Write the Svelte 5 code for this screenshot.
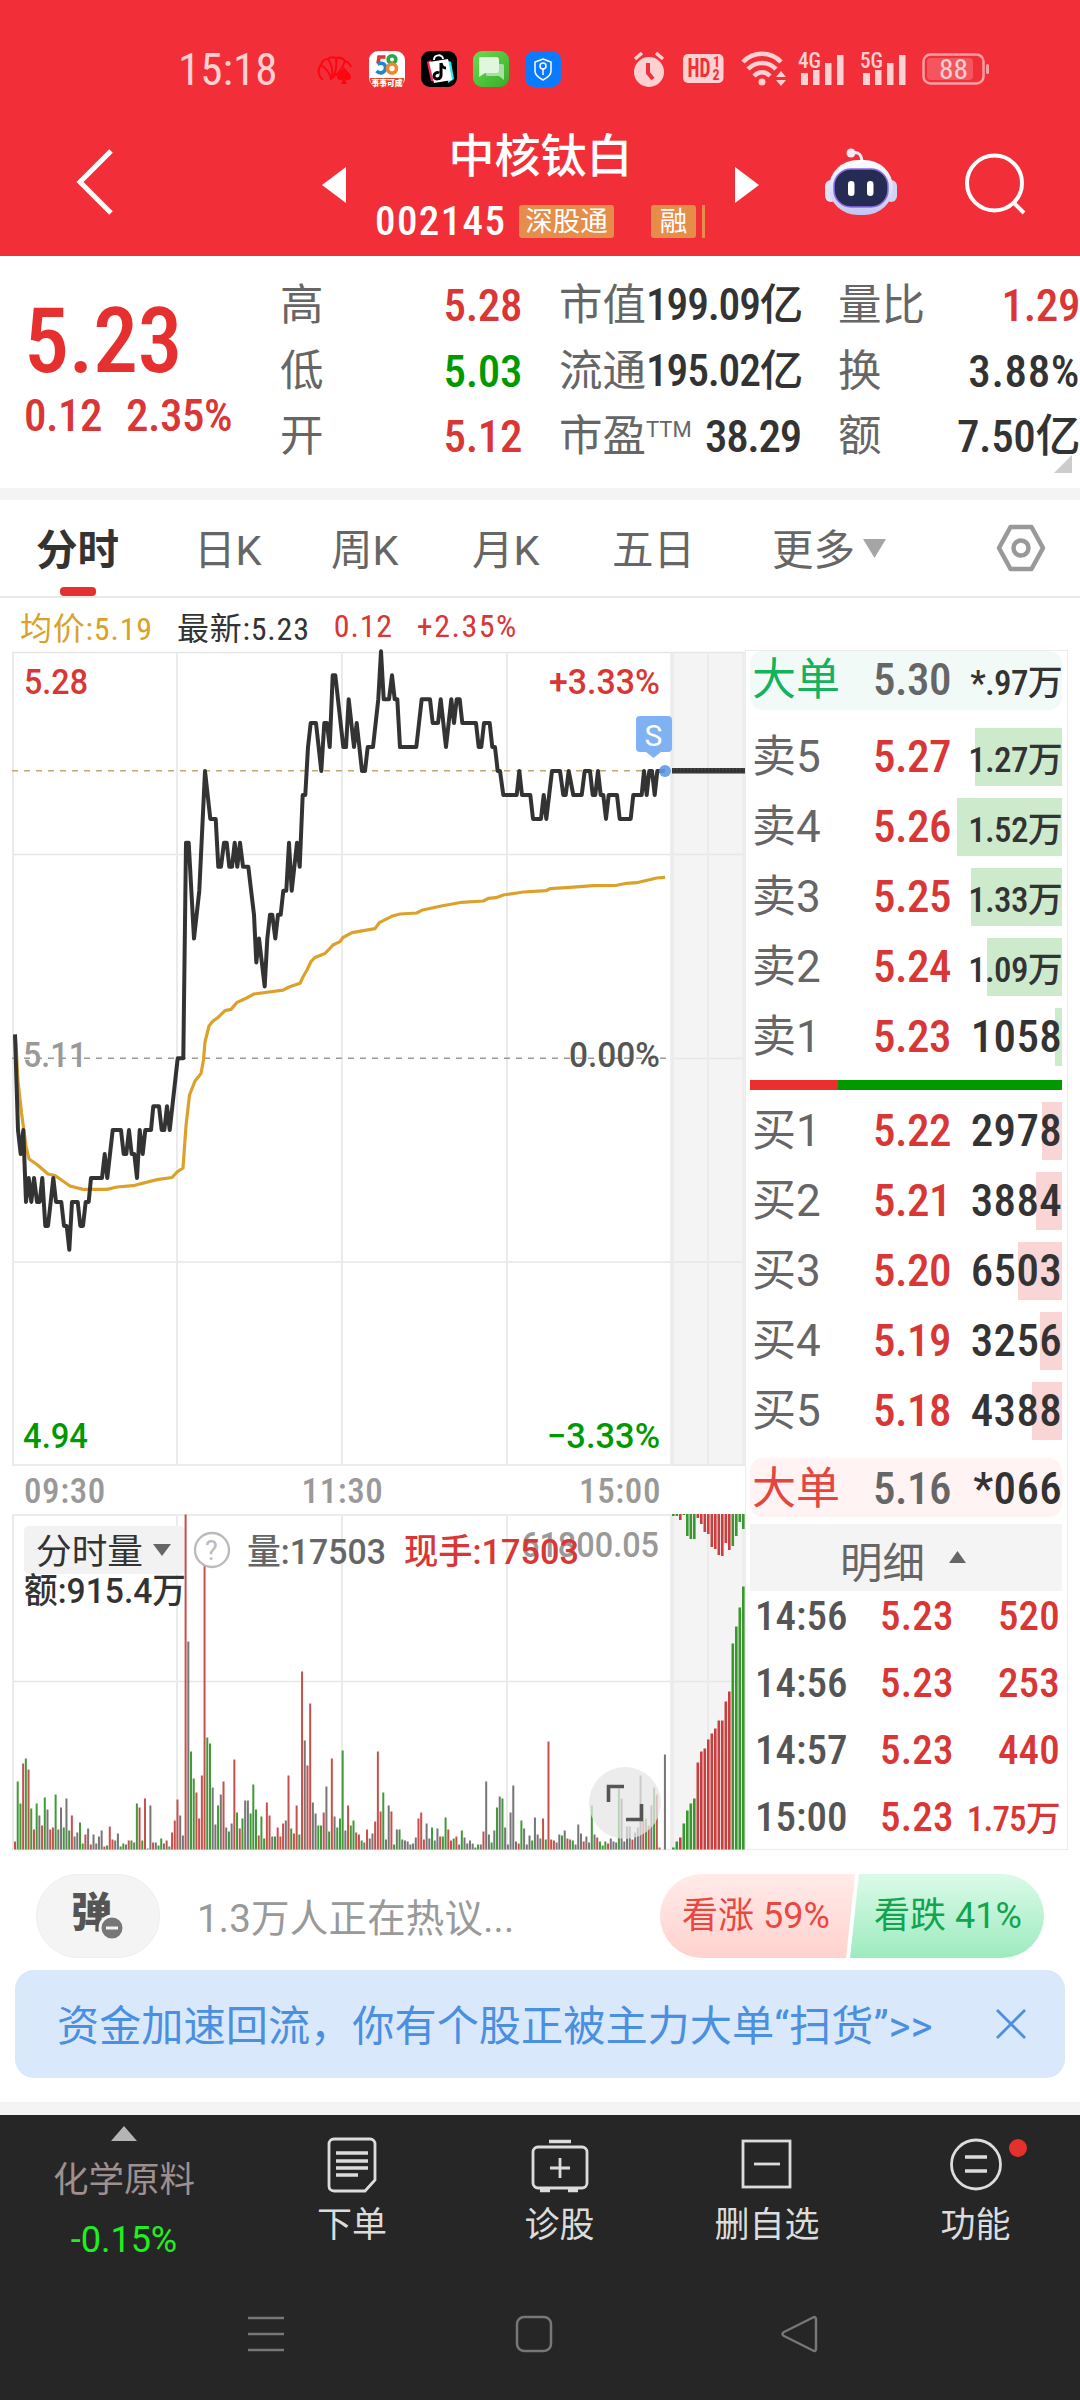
<script>
  const stats = [
    [{ k: '高', v: '5.28', c: 'up' }, { k: '低', v: '5.03', c: 'down' }, { k: '开', v: '5.12', c: 'up' }],
    [{ k: '市值', v: '199.09亿', c: 'narrow' }, { k: '流通', v: '195.02亿', c: 'narrow' }, { k: '市盈', sup: 'TTM', v: '38.29', c: 'snug' }],
    [{ k: '量比', v: '1.29', c: 'up' }, { k: '换', v: '3.88%', c: 'loose' }, { k: '额', v: '7.50亿' }],
  ];
  const tabs = ['分时', '日K', '周K', '月K', '五日', '更多'];

  const sells = [
    { n: '卖5', p: '5.27', v: '1.27万', w: 87 },
    { n: '卖4', p: '5.26', v: '1.52万', w: 105 },
    { n: '卖3', p: '5.25', v: '1.33万', w: 91 },
    { n: '卖2', p: '5.24', v: '1.09万', w: 75 },
    { n: '卖1', p: '5.23', v: '1058', w: 7 },
  ];
  const buys = [
    { n: '买1', p: '5.22', v: '2978', w: 20 },
    { n: '买2', p: '5.21', v: '3884', w: 26 },
    { n: '买3', p: '5.20', v: '6503', w: 44 },
    { n: '买4', p: '5.19', v: '3256', w: 22 },
    { n: '买5', p: '5.18', v: '4388', w: 30 },
  ];
  const trades = [
    ['14:56', '5.23', '520'],
    ['14:56', '5.23', '253'],
    ['14:57', '5.23', '440'],
    ['15:00', '5.23', '1.75万'],
  ];

  // Price path: x in thirds of a pixel, level in ticks of 0.01 away from 5.11
  const price = '45,1 54,-3 62,-4 70,-3 78,-6 86,-5 94,-6 102,-5 111,-6 119,-6 127,-5 136,-7 144,-7 152,-6 160,-5 168,-6 184,-6 192,-7 200,-7 208,-8 216,-6 233,-6 241,-7 249,-7 257,-6 266,-6 273,-5 306,-5 314,-4 322,-5 338,-3 363,-3 371,-4 379,-4 387,-3 395,-4 403,-4 411,-5 419,-3 428,-4 436,-3 453,-3 460,-2 477,-2 485,-3 493,-3 501,-2 509,-3 533,0 550,0 558,9 566,9 582,5 598,7 615,12 631,10 647,10 655,8 663,8 672,9 680,9 688,8 696,8 704,9 712,8 720,9 729,8 745,8 762,6 769,4 777,5 794,3 802,5 810,6 817,6 826,5 834,6 842,6 850,7 859,7 867,9 875,7 891,9 899,8 908,11 916,11 924,13 932,14 948,14 964,12 973,14 981,14 989,13 998,16 1006,16 1030,13 1038,13 1046,15 1062,13 1070,14 1086,12 1095,12 1103,13 1119,13 1135,15 1143,17 1151,15 1167,15 1176,16 1184,15 1192,15 1200,13 1249,13 1265,15 1290,15 1298,14 1314,14 1322,15 1338,13 1354,15 1362,14 1370,15 1379,15 1387,14 1428,14 1436,13 1444,13 1452,14 1469,14 1477,13 1485,13 1493,12 1500,12 1510,11 1550,11 1558,12 1566,11 1591,11 1599,10 1623,10 1631,11 1639,10 1656,12 1680,12 1690,11 1697,11 1706,12 1720,11 1745,11 1754,12 1770,12 1778,11 1786,11 1794,12 1802,11 1810,11 1818,10 1826,11 1851,11 1859,10 1892,10 1900,11 1925,11 1932,12 1940,11 1948,12 1956,12 1964,11 1972,12 1995,12';
  const pricePts = price
    .split(' ')
    .map((s) => s.split(',').map(Number))
    .map(([x, t]) => `${(x / 3).toFixed(1)},${(1058.3 - t * 23.94).toFixed(1)}`)
    .join(' ');

  const avgPts =
    '15,1036 16,1044 18,1081 21.5,1113 26,1146 29,1159 37,1164.5 48,1174 55,1175.5 70,1186 83,1189.4 107,1189.4 117,1187 133,1185.7 157,1179.6 172,1177.5 177,1172 183,1168 186,1126 189.5,1095 195,1081 201,1073.5 203.5,1060 205,1042 209,1026 213,1021 218,1017.5 225,1010.6 231,1009.4 237,1002.4 245,998.8 254,994 283,990.2 289,987 300,983.3 303,977 307,970 311,961.6 315,957.5 325,953.5 333,945 340,941.6 343,937.5 352,932.6 375,928.6 379.3,922.7 391.7,916.3 400,914 416.7,913 421.7,910.3 440,906.3 461.7,902.3 483.3,901 488.3,898.3 496,897.7 503.3,895 523.3,892 546,890.7 550,888.7 570,887.3 593.3,885.7 616.7,885.3 626.7,883.3 636.7,882.7 656.7,878 665,877.3';

  // One entry per trading minute: colour key and bar height
  const volume = 'r8 g68 g46 r86 g91 r80 g41 r20 g46 k34 r24 g52 k40 r20 r22 g55 k20 k42 g22 k51 g19 r34 k13 k17 g27 g6 r15 k21 r5 k15 k6 k13 k19 r3 g4 r23 r10 k9 k16 g3 g6 k5 r9 g9 k7 g46 r42 g9 r51 k1 k44 r7 k7 g4 g11 k6 r9 g3 r17 r29 r50 k34 k14 r335 k208 g98 g71 r57 r31 r74 r285 g112 g106 k62 k25 g44 k55 r68 k22 g18 k26 r90 g37 r21 g31 k49 k49 g36 g65 g40 r14 g33 g11 r47 r34 k13 g13 r22 r13 r26 k29 r74 g21 r16 r44 g15 r178 k109 r84 r146 k47 k36 g24 g24 r37 k63 g18 r91 k33 g22 g31 g99 k19 r44 g24 g29 r17 r15 g9 k7 r20 k11 k16 r28 r98 r38 g57 k10 k44 r38 g5 k20 g20 k10 k9 k8 k5 k6 k12 r31 r37 r10 k26 k11 g22 k9 k21 r13 g13 g32 r20 r9 g11 r13 k5 g19 k12 k6 k9 k6 g2 g5 k5 r18 k68 k15 g7 k19 g42 k53 g51 k22 k5 k37 k64 k8 r6 g29 k21 k5 k14 g9 k32 k15 k11 r31 g10 r108 r10 r9 k7 k15 g14 k19 r11 k10 g9 k5 k25 k16 r8 k13 k7 g44 k15 r12 g8 g4 g8 r6 k11 k8 k7 g61 k51 k8 k23 k23 r10 k17 k22 k74 r29 g31 r24 k44 g62 r55 r2 k0 k95'.split(' ');
  const afterTop = 'g2 g2 r6 g1 g22 g25 g25 r4 r10 r18 r20 r33 r35 r41 r42 r29 r36 g32 g22 g8 g15'.split(' ');
  const afterBottom = 'g2 g8 r12 g26 g39 g46 g51 r87 r98 r101 r110 r116 r121 r129 r129 r148 r158 g206 g223 g242 g263'.split(' ');
</script>

{#snippet label(x, y, w, text, cls)}
  <text {x} {y} textLength={w} lengthAdjust="spacingAndGlyphs" class={cls}>{text}</text>
{/snippet}

{#snippet signal(name)}
  <svg class="signal" width="48" height="34" viewBox="0 0 48 34">
    <text x="0" y="16" textLength="23" lengthAdjust="spacingAndGlyphs">{name}</text>
    <path d="M3 21h7v12H3zM15 18h6.500v15H15zM27 11h6.500v22H27zM39 3h6.500v30H39z" />
  </svg>
{/snippet}

{#snippet level(row, side)}
  <div class="level {side}">
    <i class="depth" style="width: {row.w}px"></i>
    <span class="name">{row.n}</span>
    <span class="px">{row.p}</span>
    <span class="qty" class:small={row.v.includes('万')}>{row.v}</span>
  </div>
{/snippet}

<div class="app">
  <header>
    <div class="status">
      <span class="clock">15:18</span>
      <div class="apps">
        <svg width="36" height="36" viewBox="0 0 36 36">
          <g fill="none" stroke="#fb0712" stroke-width="2">
            <path d="M6 29C0 24 1 17 4 14c5 3 9 8 10 15M4 14c1-4 4-6 7-6 4 5 5 12 4 20M11 8c2-2 5-2 8-1 1 7 0 14-3 20M19 7c4-1 7 0 9 3-2 6-5 11-10 15M28 10c3 1 5 3 6 6" />
          </g>
          <path d="M27 16c3 5 7 6 7 10 0 4-5 4-6 2l2 5h-6l2-5c-2 2-6 1-6-2 0-4 5-5 7-10z" fill="#fb0712" />
        </svg>
        <svg width="36" height="36" viewBox="0 0 36 36">
          <rect width="36" height="36" rx="9" fill="#fff" />
          <g fill="none" stroke-width="3.600">
            <path d="M16.500 6H10l-1 6.500" stroke="#e5352f" />
            <path d="M8.500 13c5-2 8 0 8 4s-5 7-9 3" stroke="#1d86cf" />
            <circle cx="23" cy="8.500" r="3.800" stroke="#27a844" />
            <circle cx="23" cy="17.500" r="4.500" stroke="#f0882b" />
          </g>
          <path d="M1 27h34c0 6-3 9-9 9H10c-6 0-9-3-9-9z" fill="#e2471f" />
          <text x="2.500" y="34.500" textLength="31" lengthAdjust="spacingAndGlyphs" class="tiny">事事可成</text>
        </svg>
        <svg width="36" height="36" viewBox="0 0 36 36">
          <rect width="36" height="36" rx="9" fill="#000" />
          <path d="M13 9c0-6 9-6 9-1" fill="none" stroke="#fff" stroke-width="2" />
          <path d="M6 11l4-2 5 22-5-1z" fill="#fe2c55" />
          <path d="M26 9l4 2 3 17-6 4z" fill="#25f4ee" />
          <path d="M8 11l19-3 4 21-18 3z" fill="#fff" />
          <path d="M20 12v12c0 5-7 5-7 1 0-3 3-4 5-3M20 12c1 4 3 5 5 5" fill="none" stroke="#000" stroke-width="3" />
        </svg>
        <svg width="36" height="36" viewBox="0 0 36 36">
          <defs>
            <linearGradient id="msg" x1="0" y1="0" x2="1" y2="1">
              <stop offset="0" stop-color="#6cdb50" />
              <stop offset="1" stop-color="#35ad2b" />
            </linearGradient>
          </defs>
          <rect width="36" height="36" rx="9" fill="url(#msg)" />
          <path d="M15 13h14c2 0 2 1 2 2v14l-5-4H15c-2 0-2-1-2-2v-8c0-1 0-2 2-2z" fill="#a9e09f" />
          <path d="M8 6h15c2 0 3 1 3 3v10c0 2-1 3-3 3H12l-6 4V9c0-2 0-3 2-3z" fill="#e2f6df" />
        </svg>
        <svg width="36" height="36" viewBox="0 0 36 36">
          <rect width="36" height="36" rx="9" fill="#0a7bff" />
          <g fill="none" stroke="#fff" stroke-width="1.500">
            <path d="M18 8l8 3v9c0 4-4 7-8 9-4-2-8-5-8-9v-9z" />
            <circle cx="18" cy="15" r="3" />
            <path d="M18 18v6" />
          </g>
        </svg>
      </div>
      <svg class="alarm" width="34" height="36" viewBox="0 0 34 36">
        <circle cx="17" cy="21" r="15" class="soft" />
        <path d="M3 8l7-6M31 8l-7-6" class="softline" />
        <path d="M16 12v10l5 6" class="redline" />
      </svg>
      <svg class="hd" width="42" height="30" viewBox="0 0 42 30">
        <rect width="40.500" height="29" rx="5" class="soft" />
        <text x="4.500" y="23" textLength="23" lengthAdjust="spacingAndGlyphs" class="hdtext">HD</text>
        <text x="30" y="13" class="hdsub">1</text>
        <text x="29.500" y="26" class="hdsub">2</text>
      </svg>
      <svg class="wifi" width="46" height="36" viewBox="0 0 46 36">
        <g class="softline thickline">
          <path d="M2 11c10-11 28-11 38 0" />
          <path d="M7 18c8-8 20-8 28 0" />
          <path d="M13 25c5-5 11-5 16 0" />
        </g>
        <circle cx="21" cy="31" r="3.500" class="soft" />
        <path d="M40 20l5 6H35zM40 35l5-6H35z" class="soft" />
      </svg>
      {@render signal('4G')}
      {@render signal('5G')}
      <svg class="battery" width="68" height="34" viewBox="0 0 68 34">
        <rect x="1.500" y="1.500" width="60" height="29" rx="7" fill="none" stroke="#f9a0a4" stroke-width="2.500" />
        <rect x="5" y="5" width="46" height="22" rx="4" fill="#f5565e" />
        <rect x="64" y="11" width="3" height="10" rx="1.500" fill="#f9a0a4" />
        <text x="17" y="25.500" textLength="29" lengthAdjust="spacingAndGlyphs">88</text>
      </svg>
    </div>

    <div class="titlebar">
      <svg class="back" width="40" height="68" viewBox="0 0 40 68"><path d="M36 3L5 34l31 31" /></svg>
      <svg class="prev" width="24" height="38" viewBox="0 0 24 38"><path d="M24 1v36L0 19z" /></svg>
      <div class="stock">
        <h1>中核钛白</h1>
        <div class="code">
          <b>002145</b><span class="tag">深股通</span><span class="tag last">融</span><i></i>
        </div>
      </div>
      <svg class="next" width="24" height="38" viewBox="0 0 24 38"><path d="M0 1v36l24-18z" /></svg>
      <svg class="robot" width="74" height="68" viewBox="0 0 74 68">
        <defs>
          <linearGradient id="shell" x1="0" y1="0" x2="0" y2="1">
            <stop offset="0" stop-color="#ffffff" />
            <stop offset="1" stop-color="#c3c4f2" />
          </linearGradient>
        </defs>
        <path d="M27 5c8-2 11 2 11 10" fill="none" stroke="#f3e9fb" stroke-width="3" />
        <circle cx="27" cy="5" r="4.500" fill="#f3e9fb" />
        <rect x="1" y="32" width="12" height="22" rx="6" fill="#e3e0f8" />
        <rect x="61" y="32" width="12" height="22" rx="6" fill="#d2d4f7" />
        <rect x="5" y="12" width="64" height="55" rx="29" fill="url(#shell)" />
        <rect x="10" y="21" width="54" height="38" rx="17" fill="#252b52" stroke="#8a6be8" stroke-width="1.500" />
        <rect x="24" y="33" width="6.500" height="15" rx="3.200" fill="#fff" />
        <rect x="43" y="33" width="6.500" height="15" rx="3.200" fill="#fff" />
      </svg>
      <svg class="search" width="64" height="64" viewBox="0 0 64 64">
        <circle cx="29.500" cy="30" r="27.500" /><path d="M48 49l11 11" />
      </svg>
    </div>
  </header>

  <section class="quote">
    <div class="now">
      <strong>5.23</strong>
      <p><span>0.12</span><span>2.35%</span></p>
    </div>
    {#each stats as col}
      <dl>
        {#each col as s}
          <div>
            <dt>{s.k}{#if s.sup}<small>{s.sup}</small>{/if}</dt>
            <dd class={s.c}>{s.v}</dd>
          </div>
        {/each}
      </dl>
    {/each}
    <svg class="corner" width="18" height="18" viewBox="0 0 18 18"><path d="M18 0v18H0z" /></svg>
  </section>

  <nav class="tabs">
    {#each tabs as t, i}
      <span class:active={i === 0}>
        {t}{#if i === 5}<svg width="23" height="19" viewBox="0 0 23 19"><path d="M0 0h23L11.500 19z" /></svg>{/if}
      </span>
    {/each}
    <svg class="gear" width="50" height="48" viewBox="0 0 50 48">
      <path d="M14.500 3h21L47 24 35.500 45h-21L3 24z" /><circle cx="25" cy="24" r="7.500" />
    </svg>
  </nav>

  <div class="legend">
    <span class="avg">均价:5.19</span><span>最新:5.23</span><span class="up">0.12</span><span class="up pct">+2.35%</span>
  </div>

  <main>
    <div class="charts">
      <svg width="745" height="820" viewBox="0 648 745 820">
        <rect x="671" y="652" width="74" height="813" fill="#f4f4f4" />
        <g class="grid">
          <path d="M12 652.500H745M12 854.500H745M12 1262H745M12 1465H745M672 1058.500H745" class="thin" />
          <path d="M13 652V1466M177 652V1466M342 652V1466M507 652V1466M708 652V1466M743.500 652V1466" />
          <path d="M672 652V1466" class="thick" />
        </g>
        <path d="M12 770.800H664" stroke="#c3a473" stroke-width="1.600" stroke-dasharray="6 6" />
        <path d="M12 1058.300H668" stroke="#999" stroke-width="1.600" stroke-dasharray="6 6" />
        <polyline points={avgPts} fill="none" stroke="#dca12a" stroke-width="3.200" stroke-linejoin="round" />
        {@render label(24, 694, 64, '5.28', 'up')}
        {@render label(23, 1067, 64, '5.11', 'mute')}
        {@render label(23, 1448, 65, '4.94', 'down')}
        {@render label(549, 694, 111, '+3.33%', 'up')}
        {@render label(569, 1067, 91, '0.00%', 'dim')}
        {@render label(547, 1448, 113, '−3.33%', 'down')}
        <polyline points={pricePts} fill="none" stroke="#333" stroke-width="4" stroke-linejoin="round" />
        <path d="M672 770.800H745" stroke="#333" stroke-width="5.500" />
        <path d="M673 769H745M673 773H745" stroke="#777" stroke-width="0.600" stroke-dasharray="1.500 2" />
        <circle cx="665" cy="771" r="6" fill="#5d9ae8" fill-opacity="0.900" />
        <rect x="636" y="716" width="36" height="36" rx="4" fill="#7fb2f3" />
        <path d="M646 752h15l-7.500 6z" fill="#7fb2f3" />
        <text x="644.500" y="745.500" class="sell">S</text>
      </svg>
      <div class="times"><span>09:30</span><span>11:30</span><span>15:00</span></div>
      <svg width="745" height="339" viewBox="0 1512 745 339">
        <rect x="671" y="1515" width="74" height="334" fill="#f4f4f4" />
        <g class="grid">
          <path d="M12 1515H672M12 1681.500H745M12 1849.500H745" class="thin" />
          <path d="M13 1515V1850M177 1515V1850M342 1515V1850M507 1515V1850M708 1515V1850M743.500 1515V1850" />
          <path d="M672 1515V1850" class="thick" />
        </g>
        <rect x="24" y="1526" width="161" height="48" rx="5" fill="#f2f2f2" />
        {#each volume as b, i}
          <rect class="b{b[0]}" x={14 + i * 2.708} y={1849.5 - b.slice(1)} width="2" height={b.slice(1)} />
        {/each}
        {#each afterTop as b, i}
          <rect class="a{b[0]}" x={672 + i * 3.5} y="1514" width="2.600" height={b.slice(1)} />
        {/each}
        {#each afterBottom as b, i}
          <rect class="a{b[0]}" x={672 + i * 3.5} y={1849.5 - b.slice(1)} width="2.600" height={b.slice(1)} />
        {/each}
        <circle cx="625" cy="1803" r="36" fill="#e6e6e6" fill-opacity="0.750" />
        <path d="M608.500 1802v-15.500H624M626 1819.500h15.500V1804" fill="none" stroke="#555" stroke-width="3.600" />
        {@render label(36, 1564, 107, '分时量', 'ink plain')}
        <path d="M153 1544h18l-9 12z" fill="#666" />
        <circle cx="212" cy="1550" r="17" fill="#fff" stroke="#bbb" stroke-width="2.400" />
        <text x="205" y="1560" class="q">?</text>
        {@render label(247, 1563.5, 139, '量:17503', 'dim2')}
        {@render label(521, 1557, 138, '61800.05', 'mute')}
        {@render label(404, 1563.5, 175, '现手:17503', 'up')}
        {@render label(24, 1603, 162, '额:915.4万', 'ink')}
      </svg>
    </div>

    <aside>
      <div class="level big sellbig">
        <span class="name">大单</span><span class="px">5.30</span><span class="qty small">*.97万</span>
      </div>
      <div class="book sells">
        {#each sells as r}{@render level(r, 'ask')}{/each}
      </div>
      <div class="ratio"></div>
      <div class="book buys">
        {#each buys as r}{@render level(r, 'bid')}{/each}
      </div>
      <div class="level big buybig">
        <span class="name">大单</span><span class="px">5.16</span><span class="qty">*066</span>
      </div>
      <div class="detail">
        明细<svg width="17" height="12" viewBox="0 0 17 12"><path d="M0 12L8.500 0 17 12z" /></svg>
      </div>
      {#each trades as [t, p, v]}
        <div class="trade"><span>{t}</span><b>{p}</b><b class="vol" class:small={v.includes('万')}>{v}</b></div>
      {/each}
    </aside>
  </main>

  <section class="talk">
    <div class="danmu">
      弹<svg width="28" height="28" viewBox="0 0 28 28"><circle cx="14" cy="14" r="12" /><path d="M8 14h12" /></svg>
    </div>
    <p>1.3万人正在热议...</p>
    <div class="vote"><span class="bull">看涨 59%</span><span class="bear">看跌 41%</span></div>
  </section>

  <section class="banner">
    <span>资金加速回流，你有个股正被主力大单“扫货”&gt;&gt;</span>
    <svg width="32" height="32" viewBox="0 0 32 32"><path d="M2 2l28 28M30 2L2 30" /></svg>
  </section>

  <footer>
    <div class="actions">
      <div class="sector">
        <svg width="26" height="15" viewBox="0 0 26 15"><path d="M0 15L13 0l13 15z" /></svg>
        <span>化学原料</span>
        <em>-0.15%</em>
      </div>
      <div class="action">
        <svg width="60" height="60" viewBox="0 0 60 60">
          <path d="M12 4h36c3 0 5 2 5 5v36L43 56H12c-3 0-5-2-5-5V9c0-3 2-5 5-5z" />
          <path d="M14 18h32M14 26h32M14 33h32M14 40h22" class="bold" />
        </svg>
        <span>下单</span>
      </div>
      <div class="action">
        <svg width="60" height="60" viewBox="0 0 60 60">
          <rect x="3" y="12" width="54" height="41" rx="5" />
          <path d="M19 6.500h22M10 55.500h10M38 55.500h10" class="bold" />
          <path d="M30 23v20M20 33h20" />
        </svg>
        <span>诊股</span>
      </div>
      <div class="action">
        <svg width="60" height="60" viewBox="0 0 60 60">
          <rect x="6" y="6" width="47" height="46" /><path d="M17 29h26" />
        </svg>
        <span>删自选</span>
      </div>
      <div class="action">
        <svg width="60" height="60" viewBox="0 0 60 60">
          <circle cx="30" cy="29.500" r="24.500" /><path d="M19 22h22M19 36h22" class="bold" />
        </svg>
        <span>功能</span>
        <i class="dot"></i>
      </div>
    </div>
    <div class="system">
      <svg width="40" height="40" viewBox="0 0 40 40"><path d="M2 4h36M2 20h36M2 36h36" /></svg>
      <svg width="40" height="40" viewBox="0 0 40 40"><rect x="3" y="3" width="34" height="34" rx="7" /></svg>
      <svg width="40" height="40" viewBox="0 0 40 40"><path d="M31 3.500c2-1 3 0 3 2v29c0 2-1 3-3 2L2 22c-2-1-2-3 0-4z" /></svg>
    </div>
  </footer>
</div>

<style>
  :global(body) { margin: 0; background: #fff; }
  .app {
    width: 1080px;
    height: 2400px;
    overflow: hidden;
    display: flex;
    flex-direction: column;
    background: #fff;
    color: #333;
    font-family: Roboto, 'Noto Sans CJK SC', sans-serif;
    font-stretch: 87.5%;
  }
  svg { display: block; flex: none; overflow: visible; }
  h1, p, dl, dt, dd { margin: 0; }
  b, strong { font-weight: 500; }
  .up { color: #d93636; fill: #d93636; }
  .down { color: #009900; fill: #009900; }

  header { height: 256px; flex: none; background: #f22f38; color: #fff; }
  .status { height: 130px; padding: 8px 0 0 178px; box-sizing: border-box; display: flex; align-items: center; }
  .clock { width: 139px; font-size: 45px; color: #fdd0d2; }
  .apps { display: flex; gap: 16px; width: 315px; }
  .soft { fill: #fdd0d2; }
  .softline { fill: none; stroke: #fdd0d2; stroke-width: 3.5; }
  .thickline { stroke-width: 4.5; }
  .redline { fill: none; stroke: #f22f38; stroke-width: 4; }
  .hd { margin-left: 17px; }
  .hdtext { font-size: 25px; font-weight: 700; fill: #f22f38; }
  .hdsub { font-size: 14px; font-weight: 700; fill: #f22f38; }
  .tiny { font-size: 8px; font-weight: 900; fill: #fff; }
  .wifi { margin: 0 11px 0 16px; }
  .signal { fill: #fdd0d2; margin-right: 14px; }
  .signal text { font-size: 22px; font-weight: 500; }
  .battery { margin-top: 2px; fill: #fdd0d2; }
  .battery text { font-size: 27px; }

  .titlebar { height: 125px; display: flex; align-items: flex-start; }
  .back { margin: 18px 0 0 75px; fill: none; stroke: #fff; stroke-width: 5; }
  .prev { margin: 36px 0 0 207px; fill: #fff; }
  .next { margin-top: 36px; fill: #fff; }
  .stock { width: 389px; text-align: center; }
  h1 { font-size: 46px; font-weight: 500; line-height: 52px; }
  .code { display: flex; align-items: center; padding-left: 29px; margin-top: 22px; height: 34px; }
  .code b { font-size: 41px; line-height: 34px; width: 144px; text-align: left; letter-spacing: 1.4px; }
  .tag { height: 33px; line-height: 33px; font-size: 27.5px; width: 95px; background: #e68d4a; border-radius: 3px; }
  .tag.last { width: 45px; margin-left: 37px; }
  .code i { width: 3px; height: 33px; margin-left: 6px; background: #e68d4a; }
  .robot { margin: 18px 0 0 65px; }
  .search { margin: 23px 0 0 67px; fill: none; stroke: #fff; stroke-width: 4; }

  .quote { position: relative; height: 232px; flex: none; box-sizing: border-box; padding-top: 17px; display: flex; }
  .now { width: 280px; flex: none; padding-left: 24px; box-sizing: border-box; color: #e63030; }
  .now strong { display: block; font-size: 90px; line-height: 90px; margin-top: 24px; letter-spacing: -0.5px; }
  .now p { display: flex; gap: 24px; font-size: 45px; line-height: 50px; margin-top: 4px; color: #d93636; font-weight: 500; letter-spacing: -0.5px; }
  dl { width: 242px; flex: none; margin-right: 37px; }
  dl div { display: flex; justify-content: space-between; height: 65.5px; line-height: 65.5px; white-space: nowrap; }
  dt { font-size: 43.5px; color: #666; font-weight: 400; }
  dt small { font-size: 22px; vertical-align: 14px; line-height: 1; font-stretch: 100%; }
  dd { font-size: 45px; font-weight: 500; letter-spacing: -0.4px; }
  .narrow { font-stretch: 75%; letter-spacing: -1.2px; font-size: 43.5px; margin-right: -1px; }
  .snug { letter-spacing: -1.3px; }
  .loose { letter-spacing: 0.6px; }
  .corner { position: absolute; right: 8px; bottom: 15px; fill: #ccc; }

  .tabs { height: 110px; flex: none; box-sizing: border-box; border-top: 12px solid #f4f4f4; border-bottom: 2px solid #e8e8e8; display: grid; grid-template-columns: 158px 137px 141px 140px 160px 224px 50px; align-items: center; padding-left: 36px; font-size: 41.5px; color: #666; font-stretch: 100%; }
  .tabs span { display: flex; align-items: center; height: 96px; padding-bottom: 2px; box-sizing: border-box; position: relative; }
  .tabs span svg { margin: 2px 0 0 8px; fill: #a5a5a5; }
  .tabs .active { font-weight: 700; color: #333; }
  .active::after { content: ''; position: absolute; left: 24px; bottom: 0; width: 36px; height: 9px; border-radius: 4px; background: #e63030; }
  .gear { fill: none; stroke: #999; stroke-width: 4.5; stroke-linejoin: round; }

  .legend { height: 50px; flex: none; display: flex; align-items: center; padding: 5px 0 0 20px; box-sizing: border-box; gap: 24px; font-size: 32px; font-weight: 400; letter-spacing: 0.8px; }
  .legend .avg { color: #d9a228; }
  .pct { letter-spacing: 1.5px; }

  main { display: flex; height: 1203px; flex: none; }
  .charts { width: 745px; }
  .charts text { font-size: 35px; font-weight: 500; font-stretch: 100%; }
  .charts .plain { font-weight: 400; }
  .grid { fill: none; stroke: #ebebeb; stroke-width: 2; }
  .grid .thin { stroke: #e6e6e6; stroke-width: 1.5; }
  .grid .thick { stroke-width: 3.5; }
  .mute { fill: #999; }
  .dim { fill: #555; }
  .dim2 { fill: #666; }
  .ink { fill: #333; }
  .charts .sell { font-size: 30px; fill: #fff; font-weight: 400; }
  .charts .q { font-size: 27px; fill: #bbb; font-weight: 400; }
  .br { fill: #c8504c; }
  .bg { fill: #3f9a38; }
  .bk { fill: #767676; }
  .ar { fill: #c93f3f; }
  .ag { fill: #3a962f; }
  .times { height: 44px; display: flex; justify-content: space-between; padding: 0 84px 0 24px; line-height: 47px; font-size: 35px; color: #999; font-weight: 500; letter-spacing: 0.6px; }

  aside { width: 323px; height: 1200px; margin-top: 2px; box-sizing: border-box; border: 1.5px solid #ececec; border-left-width: 1px; padding: 0 5px 0 4px; }
  .level { position: relative; height: 58px; margin-bottom: 12px; display: grid; grid-template-columns: 121px 80px 1fr; align-items: baseline; line-height: 58px; padding-left: 2px; }
  .level span { position: relative; white-space: nowrap; }
  .name { font-size: 44px; color: #666; font-stretch: 100%; }
  .px { font-size: 45px; color: #d93636; font-weight: 500; letter-spacing: -0.5px; }
  .qty { font-size: 45px; text-align: right; font-weight: 500; color: #333; letter-spacing: 0.3px; }
  .qty.small { font-size: 35px; letter-spacing: -0.7px; }
  .depth { position: absolute; right: 0; top: 0; height: 58px; background: #cdeacd; }
  .bid .depth { background: #f9d5d5; }
  .big { height: 59px; margin: 0; border-radius: 13px; }
  .big .px { color: #666; }
  .sellbig { background: #f2faf7; line-height: 57.5px; }
  .sellbig .name { color: #14b25e; }
  .buybig { background: #fff3f3; line-height: 61.5px; margin-top: 18px; }
  .buybig .name { color: #e6453f; }
  .sells { margin-top: 18px; }
  .sells .level:last-child { margin-bottom: 14px; }
  .ratio { height: 10px; margin: 2px 0 12px; background: linear-gradient(90deg, #e83030 88px, #009900 88px); }
  .detail { display: flex; align-items: center; height: 67px; margin-top: 7px; background: #f4f4f4; padding: 3px 0 0 90px; font-size: 42.5px; color: #666; box-sizing: border-box; }
  .detail svg { margin-left: 24px; fill: #666; margin-top: -4px; }
  .trade { display: grid; grid-template-columns: 125px 80px 1fr; align-items: baseline; height: 67px; line-height: 51px; padding: 0 2px 0 5px; font-size: 41px; color: #555; font-weight: 500; }
  .trade b { color: #d93636; letter-spacing: 0.2px; }
  .vol { text-align: right; white-space: nowrap; }
  .trade .vol.small { font-size: 35px; letter-spacing: -0.8px; }

  .talk { height: 84px; flex: none; margin-top: 23px; display: flex; align-items: center; padding: 0 36px; }
  .danmu { position: relative; width: 124px; height: 84px; border-radius: 42px; background: #f4f4f4; box-sizing: border-box; padding-left: 34px; font-size: 41px; line-height: 77px; font-weight: 900; color: #555; border: 1px solid #eee; }
  .danmu svg { position: absolute; left: 61px; top: 39px; fill: #777; stroke: #f4f4f4; stroke-width: 3; }
  .talk p { width: 500px; padding: 0 0 2px 37px; box-sizing: border-box; font-size: 38.5px; letter-spacing: 0.2px; color: #999; font-stretch: 100%; white-space: nowrap; }
  .vote { position: relative; display: flex; width: 384px; height: 84px; border-radius: 42px; overflow: hidden; font-size: 36px; line-height: 85px; font-weight: 400; font-stretch: 100%; }
  .vote span { box-sizing: border-box; white-space: nowrap; }
  .bull { width: 199px; padding-left: 22px; color: #e8483f; background: linear-gradient(#ffebe9, #ffd2ce); clip-path: polygon(0 0, 195px 0, 186px 100%, 0 100%); }
  .bear { width: 199px; margin-left: -14px; padding-left: 29px; color: #12a44f; background: linear-gradient(#dbfae9, #9debbe); clip-path: polygon(14px 0, 100% 0, 100% 100%, 5px 100%); }

  .banner { height: 108px; flex: none; margin: 12px 15px 0; box-sizing: border-box; padding: 0 38px 0 42px; border-radius: 19px; background: #dae8fb; color: #4a8fe0; display: flex; align-items: center; justify-content: space-between; font-size: 42.2px; font-stretch: 100%; white-space: nowrap; }
  .banner span { padding-bottom: 3px; }
  .banner svg { fill: none; stroke: #4a8fe0; stroke-width: 2.8; }

  footer { margin-top: 24px; height: 298px; flex: none; border-top: 13px solid #f4f4f4; box-sizing: border-box; background: #262626; color: #dcdcdc; }
  .actions { height: 170px; display: grid; grid-template-columns: 248px 208px 207px 208px 209px; text-align: center; }
  .sector svg { margin: 11px auto 0; fill: #b5b5b5; }
  .sector span { display: block; font-size: 35.500px; line-height: 44px; margin-top: 17px; color: #9f8f8f; }
  .sector em { display: block; font-style: normal; font-size: 36px; line-height: 40px; margin-top: 18px; color: #20f020; font-stretch: 100%; }
  .action { position: relative; }
  .action svg { margin: 20px auto 0; fill: none; stroke: #dcdcdc; stroke-width: 2.8; }
  .action .bold { stroke-width: 3.5; }
  .action span { display: block; font-size: 35px; line-height: 44px; margin-top: 9px; }
  .dot { position: absolute; right: 53px; top: 24px; width: 18px; height: 18px; border-radius: 50%; background: #e63030; }
  .system { display: flex; gap: 228px; padding: 29px 0 0 246px; }
  .system svg { fill: none; stroke: #777; stroke-width: 2.5; }
</style>
